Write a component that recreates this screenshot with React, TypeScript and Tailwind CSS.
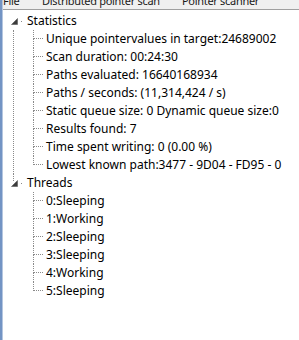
import React from "react";

const LINE = "border-dotted border-[#8a8a8a]";

function Expander() {
  return (
    <svg width="7" height="7" viewBox="0 0 7 7" className="block">
      <polygon points="6.5,0.5 6.5,6.5 0.5,6.5" fill="#3c3c3c" stroke="#5a5a5a" strokeWidth="0.6" />
    </svg>
  );
}

function Child({ text, last }: { text: string; last?: boolean }) {
  return (
    <div className="flex h-[18px] items-stretch">
      <div className="ml-[19px] flex w-[10px] flex-col">
        <div className={`h-[9px] border-l border-b ${LINE}`} />
        <div className={`h-[9px] ${last ? "" : `border-l ${LINE}`}`} />
      </div>
      <div className="ml-[3px] whitespace-nowrap leading-[18px]">{text}</div>
    </div>
  );
}

function RootRow({ text }: { text: string }) {
  return (
    <div className="flex h-[18px] items-center">
      <div className="relative h-[18px] w-[24px]">
        <div className="absolute left-[8px] top-[6px]">
          <Expander />
        </div>
        <div className="absolute left-[18px] top-[9px] h-px w-px bg-[#8a8a8a]" />
      </div>
      <div className="whitespace-nowrap leading-[18px]">{text}</div>
    </div>
  );
}

export default function App() {
  const stats = [
    "Unique pointervalues in target:24689002",
    "Scan duration: 00:24:30",
    "Paths evaluated: 16640168934",
    "Paths / seconds: (11,314,424 / s)",
    "Static queue size: 0 Dynamic queue size:0",
    "Results found: 7",
    "Time spent writing: 0 (0.00 %)",
    "Lowest known path:3477 - 9D04 - FD95 - 0",
  ];
  const threads = ["0:Sleeping", "1:Working", "2:Sleeping", "3:Sleeping", "4:Working", "5:Sleeping"];
  return (
    <div
      className="flex h-[340px] w-[299px] overflow-hidden bg-white text-[12px] text-black"
      style={{ fontFamily: '"Noto Sans", "Open Sans", sans-serif' }}
    >
      <div className="h-full w-[2px] bg-[#7394c4]" />
      <div className="h-full w-px bg-[#b4c6e0]" />
      <div className="flex min-w-0 flex-1 flex-col">
        <div className="h-[9px] overflow-hidden bg-[#f0f0f0]">
          <div className="-mt-[6px] flex whitespace-nowrap text-[11px] leading-[14px] tracking-[-0.3px] text-[#1a1a1a]">
            <span className="w-[39px] shrink-0">File</span>
            <span className="w-[140px] shrink-0">Distributed pointer scan</span>
            <span className="shrink-0">Pointer scanner</span>
          </div>
        </div>
        <div className="h-px bg-[#a0a0a0]" />
        <div className="pt-[2px]">
          <RootRow text="Statistics" />
          <div className={`ml-[10px] border-l ${LINE}`}>
            {stats.map((s, i) => (
              <Child key={s} text={s} last={i === stats.length - 1} />
            ))}
          </div>
          <div className="relative">
            <div className={`absolute left-[10px] top-0 h-[7px] border-l ${LINE}`} />
            <RootRow text="Threads" />
          </div>
          <div className="ml-[11px]">
            {threads.map((s, i) => (
              <Child key={s} text={s} last={i === threads.length - 1} />
            ))}
          </div>
        </div>
      </div>
    </div>
  );
}
